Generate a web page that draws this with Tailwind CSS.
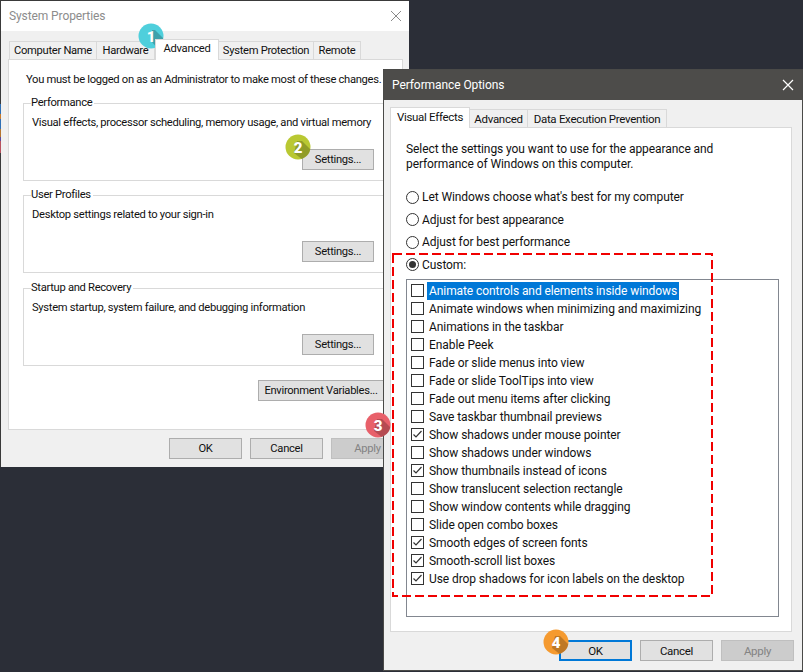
<!DOCTYPE html>
<html lang="en">
<head>
  <meta charset="UTF-8" />
  <title>System Properties</title>
  <script src="https://cdn.jsdelivr.net/npm/@tailwindcss/browser@4"></script>
</head>
<body class="relative w-[803px] h-[672px] overflow-hidden bg-[#2b2e37] font-['Roboto','Noto_Sans',sans-serif] text-[12px] leading-[16px] text-[#111] whitespace-nowrap">

  <!-- System Properties window -->
  <div class="absolute left-0 top-0 w-[409px] h-[467px] flex flex-col bg-[#f0f0f0] border-t border-l border-[#3a3a3a] text-[11.2px] tracking-[-0.3px]">
    <div class="h-[30px] shrink-0 bg-white flex items-center justify-between pl-[8px] pr-[6px]">
      <span class="text-[12px] tracking-[-0.1px] text-[#8c8c8c]">System Properties</span>
      <svg class="w-[12px] h-[12px] mr-[1px]" viewBox="0 0 12 12"><path d="M1 1l10 10M11 1L1 11" stroke="#8a8a8a" stroke-width="1" fill="none"/></svg>
    </div>
    <div class="flex items-end h-[28px] pl-[8px] shrink-0">
      <div class="w-[88px] h-[18px] border border-b-0 border-[#d9d9d9] flex items-center justify-center">Computer Name</div>
      <div class="w-[58px] h-[18px] border border-b-0 border-l-0 border-[#d9d9d9] flex items-center justify-center">Hardware</div>
      <div class="w-[64px] h-[21px] -mb-px relative z-10 bg-white border border-b-0 border-[#d9d9d9] flex items-start pt-[1px] justify-center">Advanced</div>
      <div class="w-[95px] h-[18px] border border-b-0 border-l-0 border-[#d9d9d9] flex items-center justify-center">System Protection</div>
      <div class="w-[47px] h-[18px] border border-b-0 border-l-0 border-[#d9d9d9] flex items-center justify-center">Remote</div>
    </div>
    <div class="ml-[7px] w-[395px] h-[371px] shrink-0 bg-white border border-[#d9d9d9] pl-[14px] pt-[12px]">
      <p class="pl-[3px]">You must be logged on as an Administrator to make most of these changes.</p>
      <div class="mt-[7px] flex flex-col">
        <fieldset class="w-[365px] h-[86px] border border-[#d9d9d9] pl-[8px]">
          <legend class="bg-white pr-[2px] -ml-[1px]">Performance</legend>
          <p class="mt-[4px]">Visual effects, processor scheduling, memory usage, and virtual memory</p>
          <div class="flex justify-end pr-[13px] mt-[18px]"><div class="w-[72px] h-[21px] bg-[#e1e1e1] border border-[#adadad] flex items-center justify-center">Settings...</div></div>
        </fieldset>
        <fieldset class="w-[365px] h-[86px] border border-[#d9d9d9] pl-[8px] mt-[6px]">
          <legend class="bg-white pr-[2px] -ml-[1px]">User Profiles</legend>
          <p class="mt-[4px]">Desktop settings related to your sign-in</p>
          <div class="flex justify-end pr-[13px] mt-[18px]"><div class="w-[72px] h-[21px] bg-[#e1e1e1] border border-[#adadad] flex items-center justify-center">Settings...</div></div>
        </fieldset>
        <fieldset class="w-[365px] h-[86px] border border-[#d9d9d9] pl-[8px] mt-[7px]">
          <legend class="bg-white pr-[2px] -ml-[1px]">Startup and Recovery</legend>
          <p class="mt-[4px]">System startup, system failure, and debugging information</p>
          <div class="flex justify-end pr-[13px] mt-[18px]"><div class="w-[72px] h-[21px] bg-[#e1e1e1] border border-[#adadad] flex items-center justify-center">Settings...</div></div>
        </fieldset>
      </div>
      <div class="flex mt-[14px] pl-[235px]"><div class="w-[126px] h-[21px] bg-[#e1e1e1] border border-[#adadad] flex items-center justify-center shrink-0">Environment Variables...</div></div>
    </div>
    <div class="flex gap-[8px] pl-[168px] pt-[8px]">
      <div class="w-[73px] h-[21px] bg-[#e1e1e1] border border-[#adadad] flex items-center justify-center">OK</div>
      <div class="w-[73px] h-[21px] bg-[#e1e1e1] border border-[#adadad] flex items-center justify-center">Cancel</div>
      <div class="w-[73px] h-[21px] bg-[#cccccc] border border-[#bfbfbf] text-[#838383] flex items-center justify-center">Apply</div>
    </div>
  </div>

  <!-- bit of desktop showing along the left edge -->
  <div class="absolute left-0 top-[104px] w-px flex flex-col">
    <div class="h-[10px] bg-[#2f6fb5]"></div>
    <div class="h-[5px] bg-[#c77a2e]"></div>
    <div class="h-[10px] bg-[#2f6fb5]"></div>
    <div class="h-[8px] bg-[#b5752f]"></div>
    <div class="h-[4px] bg-[#5a4a9a]"></div>
    <div class="h-[12px] bg-[#b8525e]"></div>
  </div>

  <!-- Performance Options window -->
  <div class="absolute left-[383px] top-[69px] w-[420px] h-[602px] flex flex-col bg-[#f0f0f0] border border-[#4a4a48] tracking-[-0.08px]">
    <div class="h-[30px] shrink-0 bg-[#4d4c4a] flex items-center justify-between pl-[8px] pr-[7px]">
      <span class="text-[12px] text-white">Performance Options</span>
      <svg class="w-[12px] h-[12px] mr-[1px]" viewBox="0 0 12 12"><path d="M1 1l10 10M11 1L1 11" stroke="#fff" stroke-width="1.2" fill="none"/></svg>
    </div>
    <div class="flex items-end h-[27px] pl-[6px] shrink-0 text-[11.5px] tracking-[-0.3px]">
      <div class="w-[80px] h-[21px] -mb-px relative z-10 bg-white border border-b-0 border-[#d9d9d9] flex items-start pt-[1px] justify-center">Visual Effects</div>
      <div class="w-[58px] h-[18px] border border-b-0 border-l-0 border-[#d9d9d9] flex items-center justify-center">Advanced</div>
      <div class="w-[139px] h-[18px] border border-b-0 border-l-0 border-[#d9d9d9] flex items-center justify-center">Data Execution Prevention</div>
    </div>
    <div class="ml-[6px] w-[402px] h-[505px] shrink-0 bg-white border border-[#d9d9d9] pl-[15px] pt-[14px]">
      <p class="leading-[15px]">Select the settings you want to use for the appearance and<br />performance of Windows on this computer.</p>
      <div class="mt-[17px] flex flex-col gap-[6.5px]">
        <div class="flex items-center gap-[3px] h-[16px]"><span class="w-[13px] h-[13px] rounded-full border border-[#333] bg-white"></span>Let Windows choose what's best for my computer</div>
        <div class="flex items-center gap-[3px] h-[16px]"><span class="w-[13px] h-[13px] rounded-full border border-[#333] bg-white"></span>Adjust for best appearance</div>
        <div class="flex items-center gap-[3px] h-[16px]"><span class="w-[13px] h-[13px] rounded-full border border-[#333] bg-white"></span>Adjust for best performance</div>
        <div class="flex items-center gap-[3px] h-[16px]"><span class="w-[13px] h-[13px] rounded-full border border-[#333] bg-white flex items-center justify-center"><span class="w-[7px] h-[7px] rounded-full bg-[#333]"></span></span>Custom:</div>
      </div>
      <div class="mt-[6px] w-[373px] h-[338px] border border-[#828790] pl-[4px] pt-[2px] flex flex-col">
        <div class="flex items-center h-[18px]"><span class="w-[13px] h-[13px] border border-[#333]"></span><span class="ml-[3px] pl-[2px] pr-[2px] h-[18px] bg-[#0078d7] text-white flex items-center">Animate controls and elements inside windows</span></div>
        <div class="flex items-center h-[18px] gap-[5px]"><span class="w-[13px] h-[13px] border border-[#333]"></span>Animate windows when minimizing and maximizing</div>
        <div class="flex items-center h-[18px] gap-[5px]"><span class="w-[13px] h-[13px] border border-[#333]"></span>Animations in the taskbar</div>
        <div class="flex items-center h-[18px] gap-[5px]"><span class="w-[13px] h-[13px] border border-[#333]"></span>Enable Peek</div>
        <div class="flex items-center h-[18px] gap-[5px]"><span class="w-[13px] h-[13px] border border-[#333]"></span>Fade or slide menus into view</div>
        <div class="flex items-center h-[18px] gap-[5px]"><span class="w-[13px] h-[13px] border border-[#333]"></span>Fade or slide ToolTips into view</div>
        <div class="flex items-center h-[18px] gap-[5px]"><span class="w-[13px] h-[13px] border border-[#333]"></span>Fade out menu items after clicking</div>
        <div class="flex items-center h-[18px] gap-[5px]"><span class="w-[13px] h-[13px] border border-[#333]"></span>Save taskbar thumbnail previews</div>
        <div class="flex items-center h-[18px] gap-[5px]"><span class="w-[13px] h-[13px] border border-[#333]"><svg class="w-[11px] h-[11px]" viewBox="0 0 11 11"><path d="M1.5 5.5l2.5 2.5 5.5-6" stroke="#333" stroke-width="1.2" fill="none"/></svg></span>Show shadows under mouse pointer</div>
        <div class="flex items-center h-[18px] gap-[5px]"><span class="w-[13px] h-[13px] border border-[#333]"></span>Show shadows under windows</div>
        <div class="flex items-center h-[18px] gap-[5px]"><span class="w-[13px] h-[13px] border border-[#333]"><svg class="w-[11px] h-[11px]" viewBox="0 0 11 11"><path d="M1.5 5.5l2.5 2.5 5.5-6" stroke="#333" stroke-width="1.2" fill="none"/></svg></span>Show thumbnails instead of icons</div>
        <div class="flex items-center h-[18px] gap-[5px]"><span class="w-[13px] h-[13px] border border-[#333]"></span>Show translucent selection rectangle</div>
        <div class="flex items-center h-[18px] gap-[5px]"><span class="w-[13px] h-[13px] border border-[#333]"></span>Show window contents while dragging</div>
        <div class="flex items-center h-[18px] gap-[5px]"><span class="w-[13px] h-[13px] border border-[#333]"></span>Slide open combo boxes</div>
        <div class="flex items-center h-[18px] gap-[5px]"><span class="w-[13px] h-[13px] border border-[#333]"><svg class="w-[11px] h-[11px]" viewBox="0 0 11 11"><path d="M1.5 5.5l2.5 2.5 5.5-6" stroke="#333" stroke-width="1.2" fill="none"/></svg></span>Smooth edges of screen fonts</div>
        <div class="flex items-center h-[18px] gap-[5px]"><span class="w-[13px] h-[13px] border border-[#333]"><svg class="w-[11px] h-[11px]" viewBox="0 0 11 11"><path d="M1.5 5.5l2.5 2.5 5.5-6" stroke="#333" stroke-width="1.2" fill="none"/></svg></span>Smooth-scroll list boxes</div>
        <div class="flex items-center h-[18px] gap-[5px]"><span class="w-[13px] h-[13px] border border-[#333]"><svg class="w-[11px] h-[11px]" viewBox="0 0 11 11"><path d="M1.5 5.5l2.5 2.5 5.5-6" stroke="#333" stroke-width="1.2" fill="none"/></svg></span>Use drop shadows for icon labels on the desktop</div>
      </div>
    </div>
    <div class="flex gap-[8px] pl-[175px] pt-[8px] text-[11.5px] tracking-[-0.3px]">
      <div class="w-[73px] h-[21px] bg-[#e1e1e1] border-2 border-[#0078d7] flex items-center justify-center">OK</div>
      <div class="w-[73px] h-[21px] bg-[#e1e1e1] border border-[#adadad] flex items-center justify-center">Cancel</div>
      <div class="w-[73px] h-[21px] bg-[#cccccc] border border-[#bfbfbf] text-[#838383] flex items-center justify-center">Apply</div>
    </div>
  </div>

  <!-- red dashed marker round the custom options -->
  <svg class="absolute left-[390px] top-[251px] w-[326px] h-[348px]" viewBox="0 0 326 348"><rect x="3" y="3" width="319" height="342" fill="none" stroke="#f00000" stroke-width="2" stroke-dasharray="9 4"/></svg>

  <!-- step badges -->
  <svg class="absolute left-[138px] top-[23px] w-[26px] h-[26px]" viewBox="0 0 26 26"><clipPath id="b1"><circle cx="13" cy="13" r="12.5"/></clipPath><circle cx="13" cy="13" r="12.5" fill="#4fcfdc"/><path d="M14 7h3l9 9v10h-6l-6-7z" fill="#000" opacity=".22" clip-path="url(#b1)"/><text x="13" y="18.5" text-anchor="middle" fill="#fff" font-size="15" font-weight="900">1</text></svg>
  <svg class="absolute left-[285px] top-[134px] w-[26px] h-[26px]" viewBox="0 0 26 26"><clipPath id="b2"><circle cx="13" cy="13" r="12.5"/></clipPath><circle cx="13" cy="13" r="12.5" fill="#b9c832"/><path d="M12 7h5l9 9v10h-8L9 19z" fill="#000" opacity=".22" clip-path="url(#b2)"/><text x="13" y="18.5" text-anchor="middle" fill="#fff" font-size="15" font-weight="900">2</text></svg>
  <svg class="absolute left-[365px] top-[412px] w-[26px] h-[26px]" viewBox="0 0 26 26"><clipPath id="b3"><circle cx="13" cy="13" r="12.5"/></clipPath><circle cx="13" cy="13" r="12.5" fill="#e8606a"/><path d="M12 7h5l9 9v10h-8L9 19z" fill="#000" opacity=".22" clip-path="url(#b3)"/><text x="13" y="18.5" text-anchor="middle" fill="#fff" font-size="15" font-weight="900">3</text></svg>
  <svg class="absolute left-[543px] top-[629px] w-[26px] h-[26px]" viewBox="0 0 26 26"><clipPath id="b4"><circle cx="13" cy="13" r="12.5"/></clipPath><circle cx="13" cy="13" r="12.5" fill="#f59a2f"/><path d="M12 7h5l9 9v10h-8L9 19z" fill="#000" opacity=".22" clip-path="url(#b4)"/><text x="13" y="18.5" text-anchor="middle" fill="#fff" font-size="15" font-weight="900">4</text></svg>
</body>
</html>
